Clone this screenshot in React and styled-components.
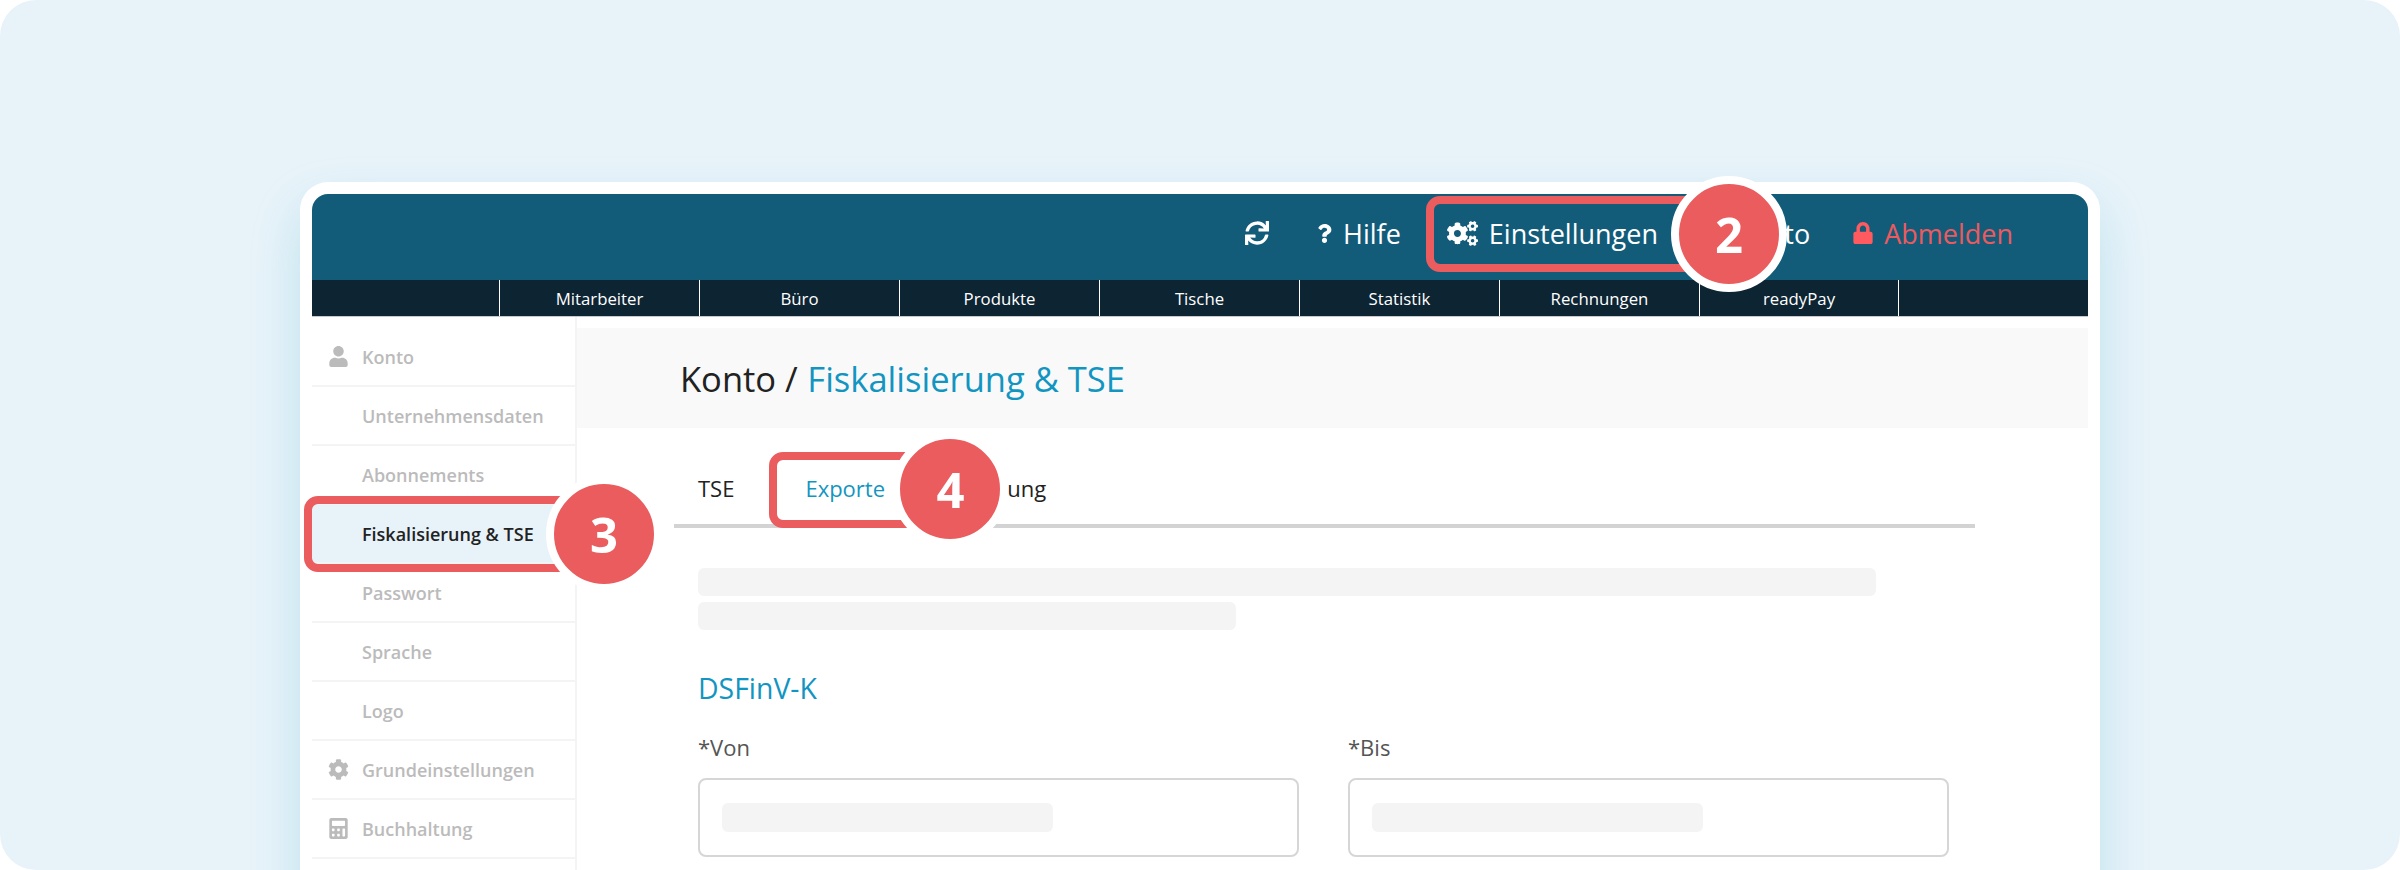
import React from "react";
import styled, { createGlobalStyle } from "styled-components";
import {
  FaSync,
  FaQuestion,
  FaCogs,
  FaUser,
  FaLock,
  FaCog,
  FaCalculator,
} from "react-icons/fa";

const RED = "#ea5c5d";
const BLUE = "#1295c1";

const GlobalStyle = createGlobalStyle`
  html, body {
    margin: 0;
    background: #fff;
    overflow: hidden;
  }
  * {
    box-sizing: border-box;
  }
`;

const Stage = styled.div`
  height: 870px;
  padding: 182px 300px 0;
  background: #e8f3f9;
  border-radius: 36px;
  overflow: hidden;
  font-family: "Open Sans", "Liberation Sans", sans-serif;
`;

const Window = styled.div`
  position: relative;
  height: 760px;
  padding: 12px;
  background: #fff;
  border-radius: 28px 28px 0 0;
  box-shadow: 0 24px 50px rgba(60, 170, 210, 0.24);
`;

const TopBar = styled.div`
  height: 86px;
  padding: 0 75px 8px 0;
  display: flex;
  align-items: center;
  justify-content: flex-end;
  background: #125c7a;
  border-radius: 16px 16px 0 0;
  color: #fff;
  font-size: 27px;
`;

const TopItem = styled.div`
  position: relative;
  margin-left: ${(p) => p.$space || 46}px;
  display: flex;
  align-items: center;
  gap: ${(p) => p.$gap || 12}px;
  color: ${(p) => (p.$danger ? "#ec5a5f" : "#fff")};
  svg {
    color: ${(p) => (p.$danger ? "#ff5a5f" : "#fff")};
    font-size: ${(p) => p.$iconSize || 24}px;
  }
`;

const NavBar = styled.div`
  height: 37px;
  padding-left: 187px;
  display: flex;
  background: #0d2433;
  border-bottom: 1px solid #c3ccd1;
`;

const NavItem = styled.div`
  width: 200px;
  padding-top: 1px;
  display: flex;
  align-items: center;
  justify-content: center;
  border-left: 1.5px solid #fff;
  border-right: ${(p) => (p.$last ? "1.5px solid #fff" : "none")};
  color: #fff;
  font-size: 16.8px;
`;

const Body = styled.div`
  display: flex;
  height: 700px;
`;

const Sidebar = styled.div`
  width: 265px;
  flex-shrink: 0;
  padding-top: 11px;
  border-right: 2px solid #f4f4f4;
`;

const SideRow = styled.div`
  position: relative;
  height: 59px;
  padding-left: 50px;
  display: flex;
  align-items: center;
  border-bottom: 2px solid #f4f4f4;
  background: ${(p) => (p.$active ? "#e8f3f9" : "transparent")};
  color: ${(p) => (p.$active ? "#222" : "#bbb")};
  font-size: 18px;
  font-weight: 600;
`;

const SideIcon = styled.span`
  position: absolute;
  left: 16px;
  width: 21px;
  display: flex;
  justify-content: center;
  color: #bbb;
  font-size: 21px;
`;

const Main = styled.div`
  flex: 1;
  min-width: 0;
  padding-top: 11px;
`;

const TitleBar = styled.div`
  height: 100px;
  padding-left: 103px;
  display: flex;
  align-items: center;
  background: #f9f9f9;
  color: #222;
  font-size: 34.5px;
  span {
    color: ${BLUE};
    margin-left: 0.28em;
  }
`;

const Content = styled.div`
  margin: 24px 113px 0 97px;
`;

const Tabs = styled.div`
  position: relative;
  height: 76px;
  padding-left: 24px;
  display: flex;
  align-items: center;
  gap: 71px;
  border-bottom: 4px solid #d3d3d3;
`;

const Tab = styled.div`
  position: relative;
  color: ${(p) => (p.$active ? BLUE : "#222")};
  font-size: 22px;
`;

const Form = styled.div`
  padding: 40px 26px 0 24px;
`;

const Bar = styled.div`
  width: ${(p) => p.$width}px;
  height: 28px;
  margin-bottom: 6px;
  background: #f4f4f4;
  border-radius: 6px;
`;

const Heading = styled.h2`
  margin: 39px 0 0;
  color: ${BLUE};
  font-size: 28.4px;
  font-weight: 400;
  line-height: 38px;
`;

const Fields = styled.div`
  margin-top: 25px;
  display: grid;
  grid-template-columns: 601px 601px;
  gap: 49px;
`;

const Label = styled.div`
  height: 30px;
  color: #555;
  font-size: 22px;
  line-height: 30px;
`;

const Input = styled.div`
  height: 79px;
  margin-top: 16px;
  padding: 0 22px;
  display: flex;
  align-items: center;
  border: 2px solid #d6d6d6;
  border-radius: 8px;
`;

const InputBar = styled.div`
  width: 331px;
  height: 29px;
  background: #f4f4f4;
  border-radius: 6px;
`;

// red frames and numbered circles lying over the screen
const Frame = styled.div`
  position: absolute;
  top: ${(p) => p.$top}px;
  left: ${(p) => p.$left}px;
  width: ${(p) => p.$width}px;
  height: 76px;
  border: 8px solid ${RED};
  border-radius: 14px;
  pointer-events: none;
`;

const Badge = styled.div`
  position: absolute;
  z-index: 2;
  top: ${(p) => p.$top}px;
  left: ${(p) => p.$left}px;
  width: 116px;
  height: 116px;
  display: flex;
  align-items: center;
  justify-content: center;
  background: ${RED};
  border: 8px solid #fff;
  border-radius: 50%;
  color: #fff;
  font-family: "Open Sans", sans-serif;
  font-size: 49px;
  font-weight: 700;
`;

const navItems = [
  "Mitarbeiter",
  "Büro",
  "Produkte",
  "Tische",
  "Statistik",
  "Rechnungen",
  "readyPay",
];

const sideItems = [
  { label: "Konto", icon: <FaUser /> },
  { label: "Unternehmensdaten" },
  { label: "Abonnements" },
  { label: "Fiskalisierung & TSE", active: true },
  { label: "Passwort" },
  { label: "Sprache" },
  { label: "Logo" },
  { label: "Grundeinstellungen", icon: <FaCog /> },
  { label: "Buchhaltung", icon: <FaCalculator /> },
];

export default function App() {
  return (
    <>
      <GlobalStyle />
      <Stage>
        <Window>
          <TopBar>
            <TopItem>
              <FaSync />
            </TopItem>
            <TopItem $iconSize={19} $gap={9}>
              <FaQuestion />
              Hilfe
            </TopItem>
            <TopItem $iconSize={31} $gap={11}>
              <FaCogs />
              Einstellungen
              <Frame $top={-19} $left={-21} $width={280} />
            </TopItem>
            <TopItem $iconSize={20} $space={45}>
              <FaUser />
              Konto
              <Badge $top={-39} $left={-32}>
                2
              </Badge>
            </TopItem>
            <TopItem $danger $iconSize={22} $gap={10} $space={42}>
              <FaLock />
              Abmelden
            </TopItem>
          </TopBar>
          <NavBar>
            {navItems.map((item, i) => (
              <NavItem key={item} $last={i === navItems.length - 1}>
                {item}
              </NavItem>
            ))}
          </NavBar>
          <Body>
            <Sidebar>
              {sideItems.map((item) => (
                <SideRow key={item.label} $active={item.active}>
                  {item.icon && <SideIcon>{item.icon}</SideIcon>}
                  {item.label}
                  {item.active && (
                    <>
                      <Frame $top={-9} $left={-8} $width={296} />
                      <Badge $top={-29} $left={234}>
                        3
                      </Badge>
                    </>
                  )}
                </SideRow>
              ))}
            </Sidebar>
            <Main>
              <TitleBar>
                Konto /<span>Fiskalisierung &amp; TSE</span>
              </TitleBar>
              <Content>
                <Tabs>
                  <Tab>TSE</Tab>
                  <Tab $active>
                    Exporte
                    <Frame $top={-21} $left={-36} $width={150} />
                    <Badge $top={-42} $left={87}>
                      4
                    </Badge>
                  </Tab>
                  <Tab>Meldung</Tab>
                </Tabs>
                <Form>
                  <Bar $width={1178} />
                  <Bar $width={538} />
                  <Heading>DSFinV-K</Heading>
                  <Fields>
                    <div>
                      <Label>*Von</Label>
                      <Input>
                        <InputBar />
                      </Input>
                    </div>
                    <div>
                      <Label>*Bis</Label>
                      <Input>
                        <InputBar />
                      </Input>
                    </div>
                  </Fields>
                </Form>
              </Content>
            </Main>
          </Body>
        </Window>
      </Stage>
    </>
  );
}
